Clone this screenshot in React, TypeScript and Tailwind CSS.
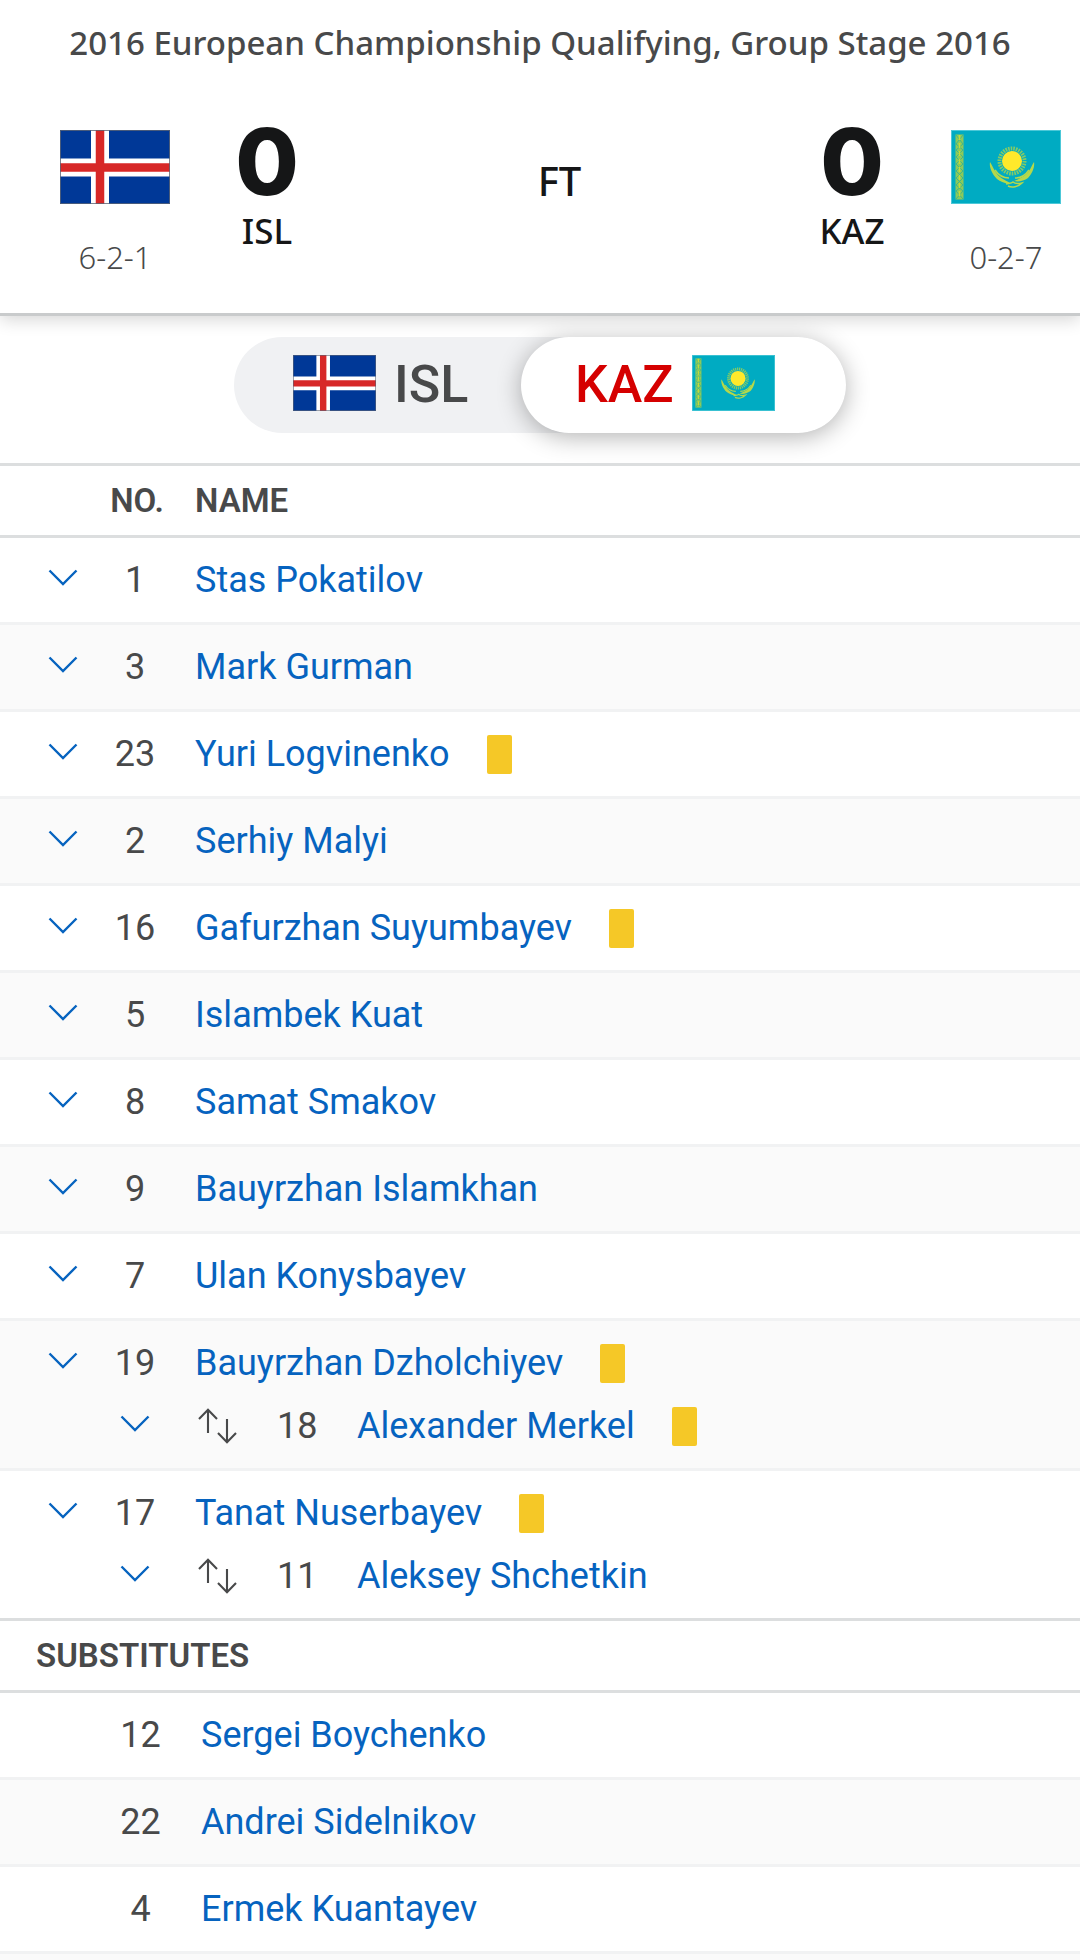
import { useState } from "react";

type Team = "ISL" | "KAZ";
type Player = { no: number; name: string; booked?: boolean; sub?: Player };

const starters: Player[] = [
  { no: 1, name: "Stas Pokatilov" },
  { no: 3, name: "Mark Gurman" },
  { no: 23, name: "Yuri Logvinenko", booked: true },
  { no: 2, name: "Serhiy Malyi" },
  { no: 16, name: "Gafurzhan Suyumbayev", booked: true },
  { no: 5, name: "Islambek Kuat" },
  { no: 8, name: "Samat Smakov" },
  { no: 9, name: "Bauyrzhan Islamkhan" },
  { no: 7, name: "Ulan Konysbayev" },
  {
    no: 19,
    name: "Bauyrzhan Dzholchiyev",
    booked: true,
    sub: { no: 18, name: "Alexander Merkel", booked: true },
  },
  {
    no: 17,
    name: "Tanat Nuserbayev",
    booked: true,
    sub: { no: 11, name: "Aleksey Shchetkin" },
  },
];

const substitutes: Player[] = [
  { no: 12, name: "Sergei Boychenko" },
  { no: 22, name: "Andrei Sidelnikov" },
  { no: 4, name: "Ermek Kuantayev" },
];

function IcelandFlag({ className }: { className: string }) {
  return (
    <svg viewBox="0 0 110 74" preserveAspectRatio="none" className={className} role="img" aria-label="Iceland">
      <rect width="110" height="74" fill="#003897" />
      <path d="M40 0V74M0 37.500H110" stroke="#fff" strokeWidth="18" />
      <path d="M40 0V74M0 37.500H110" stroke="#d72828" strokeWidth="8.500" />
      <rect x="0.500" y="0.500" width="109" height="73" fill="none" stroke="#5b6474" strokeOpacity="0.800" />
    </svg>
  );
}

function KazakhstanFlag({ className }: { className: string }) {
  return (
    <svg viewBox="0 0 110 74" preserveAspectRatio="none" className={className} role="img" aria-label="Kazakhstan">
      <rect width="110" height="74" fill="#00abc2" />
      <rect x="4.500" y="4.500" width="8" height="65" fill="#8cc95a" />
      <path
        d="M5 5L12 14L5 20L12 27L5 34L12 41L5 48L12 55L5 61L12 69M12 5L5 14L12 20L5 27L12 34L5 41L12 48L5 55L12 61L5 69"
        fill="none"
        stroke="#3fb78d"
        strokeWidth="1"
      />
      <path d="M8.500 5V69" stroke="#c3dc3c" strokeWidth="1.500" strokeDasharray="5 3" />
      <circle cx="61" cy="31" r="12.500" fill="none" stroke="#84cb66" strokeWidth="4" strokeDasharray="1.600 1" />
      <circle cx="61" cy="31" r="10" fill="#ffe92b" />
      <path
        d="M39 32C38 37 41 44 46 49C50 52 55 54 59 53C54 50 47 47 44 41C42 38 41 35 39 32Z"
        fill="#b5d84a"
      />
      <path
        d="M83 32C84 37 81 44 77 48C73 51 67 52 63 51C68 49 75 46 78 41C80 38 81 35 83 32Z"
        fill="#b5d84a"
      />
      <path
        d="M44 40C48 46 53 48 58 48M78 40C74 46 69 48 64 48M55 54C57 53 60 54 62 52C64 54 67 54 71 53C67 57 61 58 57 56"
        fill="none"
        stroke="#b5d84a"
        strokeWidth="1.500"
      />
      <rect x="0.500" y="0.500" width="109" height="73" fill="none" stroke="#4cc8d8" />
    </svg>
  );
}

function ToggleButton({ label }: { label: string }) {
  const [open, setOpen] = useState(false);
  return (
    <button
      type="button"
      aria-label={label}
      aria-expanded={open}
      onClick={() => setOpen(!open)}
      className="block cursor-pointer text-[#0663bf]"
    >
      <svg width="30" height="18" viewBox="0 0 30 18" fill="none" stroke="currentColor" strokeWidth="2.400">
        <path d="M1.500 1.500L15 15L28.500 1.500" />
      </svg>
    </button>
  );
}

function SwapIcon() {
  return (
    <svg
      width="40"
      height="36"
      viewBox="0 0 40 36"
      fill="none"
      stroke="#48494a"
      strokeWidth="2.100"
      role="img"
      aria-label="Substitution"
    >
      <path d="M11 25V1.800M2 11L11 1.800L20 11" />
      <path d="M30 11V34.200M21 25L30 34.200L39 25" />
    </svg>
  );
}

function PlayerName({ player }: { player: Player }) {
  return (
    <>
      <a href="#player" className="text-[#0663bf]">
        {player.name}
      </a>
      {player.booked && (
        <span role="img" aria-label="Yellow card" className="ml-[37px] h-[39px] w-[25px] rounded-xs bg-[#f5c827]" />
      )}
    </>
  );
}

function TeamScore({ score, code }: { score: number; code: string }) {
  return (
    <div className="flex w-24 flex-col items-center text-[#151617]">
      <span className="font-['Inter'] text-[92px] leading-[92px] font-extrabold">{score}</span>
      <span className="text-[35px] leading-[46px] font-medium">{code}</span>
    </div>
  );
}

function StarterRows({ player, striped, last }: { player: Player; striped: boolean; last: boolean }) {
  const tone = striped ? "bg-[#fafafa]" : "bg-white";
  const edge = last ? "border-b-3 border-[#dcdedf]" : "border-b-3 border-[#f1f2f3]";
  const bottom = player.sub ? "" : edge;
  const height = player.sub ? "h-[84px]" : "h-[87px]";
  return (
    <tbody className={tone}>
      <tr>
        <td className={`align-top pt-[31px] pl-12 ${height} ${bottom}`}>
          <ToggleButton label={`Show stats for ${player.name}`} />
        </td>
        <td className={`align-top pt-[21px] text-center ${bottom}`}>{player.no}</td>
        <td className={`align-top pt-[21px] pl-6 ${bottom}`}>
          <div className="flex items-center">
            <PlayerName player={player} />
          </div>
        </td>
      </tr>
      {player.sub && (
        <tr>
          <td className={`h-[66px] ${edge}`} />
          <td className={`align-top pt-[10px] ${edge}`}>
            <div className="flex justify-center">
              <ToggleButton label={`Show stats for ${player.sub.name}`} />
            </div>
          </td>
          <td className={`align-top pl-6 ${edge}`}>
            <div className="flex items-center">
              <div className="pl-0.5">
                <SwapIcon />
              </div>
              <span className="ml-10 w-20">{player.sub.no}</span>
              <PlayerName player={player.sub} />
            </div>
          </td>
        </tr>
      )}
    </tbody>
  );
}

export default function App() {
  const [team, setTeam] = useState<Team>("KAZ");
  const active = "bg-white text-[#d50000] shadow-[0_4px_24px_rgba(0,0,0,0.3)] z-10";
  const idle = "text-[#48494a]";

  return (
    <div className="flex min-h-screen flex-col overflow-hidden bg-white font-['Roboto',sans-serif] text-[36px] leading-[42px] text-[#48494a]">
      <header className="border-b-3 border-[#c9cbcc] font-['Noto_Sans',sans-serif] shadow-[0_4px_16px_rgba(0,0,0,0.16)]">
        <h1 className="pt-5 text-center text-[33px] leading-[46px] font-medium whitespace-nowrap">
          2016 European Championship Qualifying, Group Stage 2016
        </h1>
        <div className="flex justify-between pt-[50px] pr-[19px] pb-[35px] pl-[60px]">
          <div className="flex">
            <div className="flex w-[110px] flex-col items-center pt-3.5">
              <IcelandFlag className="h-[74px] w-[110px]" />
              <span className="pt-8 text-[31px] leading-[42px] font-light">6-2-1</span>
            </div>
            <div className="ml-[49px]">
              <TeamScore score={0} code="ISL" />
            </div>
          </div>
          <p className="pt-[38px] text-[40px] leading-[54px] font-medium text-[#151617]">FT</p>
          <div className="flex">
            <div className="mr-[51px]">
              <TeamScore score={0} code="KAZ" />
            </div>
            <div className="flex w-[110px] flex-col items-center pt-3.5">
              <KazakhstanFlag className="h-[74px] w-[110px]" />
              <span className="pt-8 text-[31px] leading-[42px] font-light">0-2-7</span>
            </div>
          </div>
        </div>
      </header>

      <div className="flex justify-center pt-[21px] pb-[30px]">
        <div className="flex rounded-full bg-[#f0f1f3] text-[52px] font-medium">
          <button
            type="button"
            aria-pressed={team === "ISL"}
            onClick={() => setTeam("ISL")}
            className={`relative flex h-24 w-[287px] items-center gap-[18px] rounded-full pl-[59px] ${team === "ISL" ? active : idle}`}
          >
            <IcelandFlag className="mb-1 h-14 w-[83px]" />
            ISL
          </button>
          <button
            type="button"
            aria-pressed={team === "KAZ"}
            onClick={() => setTeam("KAZ")}
            className={`relative flex h-24 w-[325px] items-center gap-[18px] rounded-full pl-[54px] ${team === "KAZ" ? active : idle}`}
          >
            KAZ
            <KazakhstanFlag className="mb-1 h-14 w-[83px]" />
          </button>
        </div>
      </div>

      <table className="w-full table-fixed border-separate border-spacing-0">
        <colgroup>
          <col className="w-[99px]" />
          <col className="w-[72px]" />
          <col />
        </colgroup>
        <thead>
          <tr className="text-[33px] leading-[40px]">
            <th aria-label="Details" className="h-[75px] border-y-3 border-[#dcdedf]" />
            <th className="border-y-3 border-[#dcdedf] pl-1 text-center font-semibold">NO.</th>
            <th className="border-y-3 border-[#dcdedf] pl-6 text-left font-semibold">NAME</th>
          </tr>
        </thead>
        {starters.map((p, i) => (
          <StarterRows key={p.no} player={p} striped={i % 2 === 1} last={i === starters.length - 1} />
        ))}
      </table>

      <table className="w-full table-fixed border-separate border-spacing-0">
        <colgroup>
          <col className="w-[177px]" />
          <col />
        </colgroup>
        <thead>
          <tr>
            <th
              colSpan={2}
              className="h-[72px] border-b-3 border-[#dcdedf] pl-9 text-left text-[33px] leading-[40px] font-semibold"
            >
              SUBSTITUTES
            </th>
          </tr>
        </thead>
        <tbody>
          {substitutes.map((p) => (
            <tr key={p.no} className="even:bg-[#fafafa]">
              <td className="h-[87px] border-b-3 border-[#f1f2f3] pl-[104px] text-center">{p.no}</td>
              <td className="border-b-3 border-[#f1f2f3] pl-6">
                <PlayerName player={p} />
              </td>
            </tr>
          ))}
        </tbody>
      </table>
      <div className="flex-1 bg-[#fafafa]" />
    </div>
  );
}
